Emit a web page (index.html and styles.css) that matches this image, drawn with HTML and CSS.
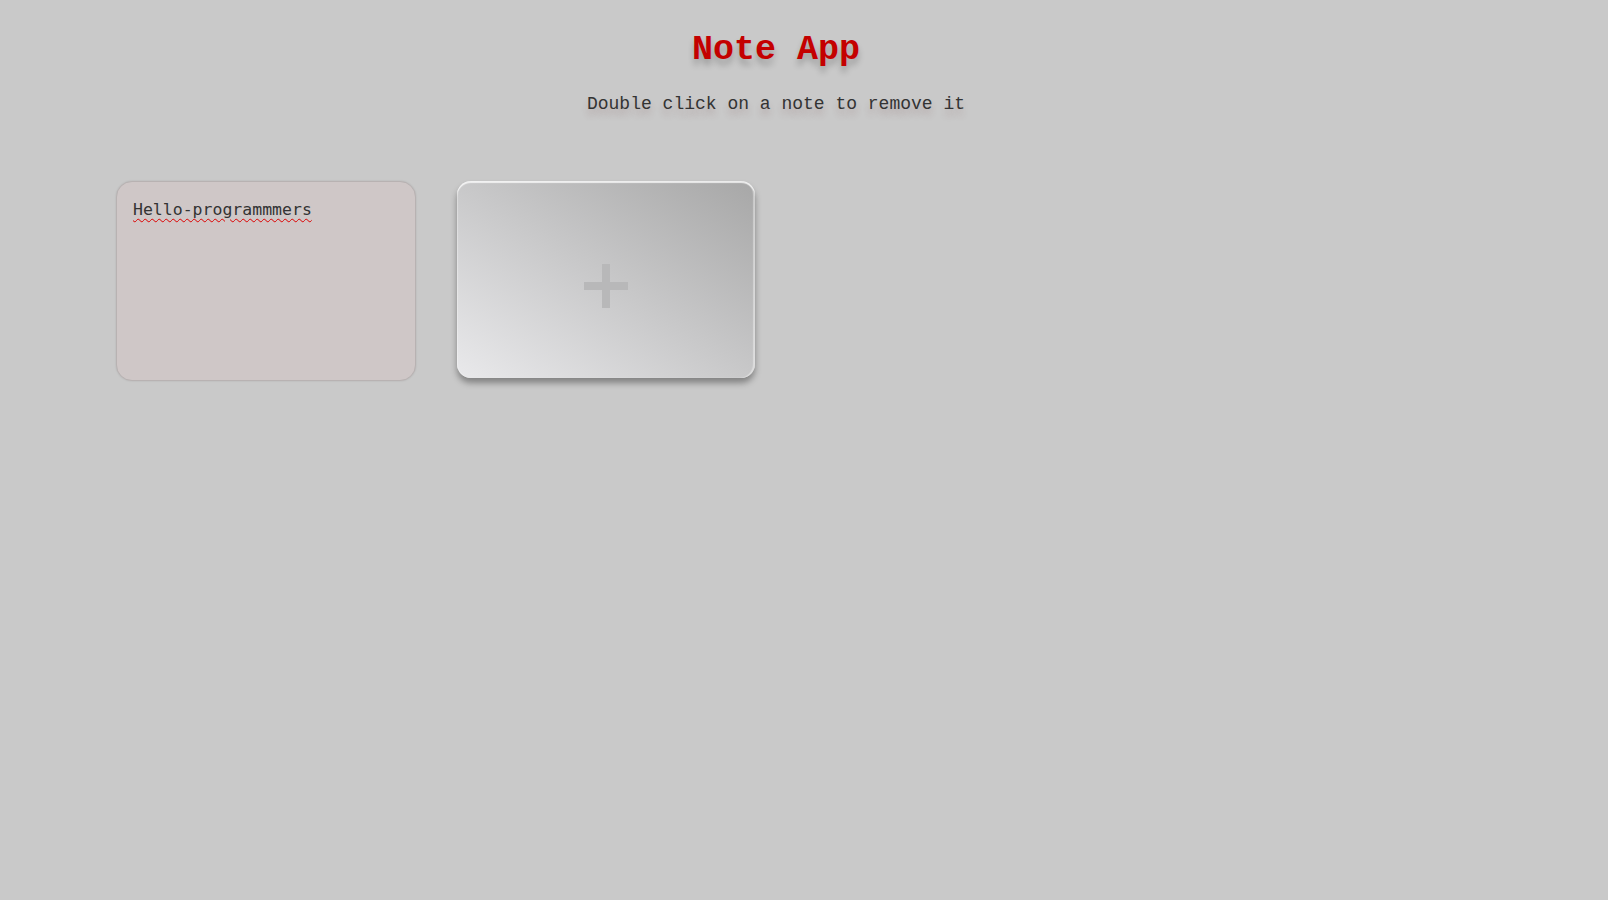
FILE: index.html
```html
<!DOCTYPE html>
<html lang="en">
<head>
<meta charset="utf-8">
<title>Note App</title>
<link rel="stylesheet" href="styles.css">
</head>
<body>
<header class="header">
  <h1 class="title">Note App</h1>
  <p class="subtitle">Double click on a note to remove it</p>
</header>
<main class="notes">
  <div class="note"><span class="misspelled">Hello-programmmers</span></div>
  <button class="add-note" type="button" aria-label="Add note">
    <svg class="plus" width="44" height="44" viewBox="0 0 44 44" aria-hidden="true">
      <rect x="0" y="18" width="44" height="8" fill="#b8b8b9"/>
      <rect x="18" y="0" width="8" height="44" fill="#b8b8b9"/>
    </svg>
  </button>
</main>
</body>
</html>
```
FILE: styles.css
```css
html, body {
  margin: 0;
  padding: 0;
}
body {
  background: #c9c9c9;
  min-height: 900px;
  font-family: "Liberation Mono", "Courier New", monospace;
}
.header {
  display: flex;
  flex-direction: column;
  align-items: center;
  margin-right: 56px;
  padding-top: 30px;
}
.title {
  margin: 0;
  font-family: "Liberation Mono", "Courier New", monospace;
  font-weight: bold;
  font-size: 35px;
  line-height: 40px;
  color: #c40000;
  text-shadow: 0 6px 6px rgba(0, 0, 0, 0.22);
}
.subtitle {
  margin: 23px 0 0;
  font-size: 18px;
  line-height: 22px;
  color: #333;
  text-shadow: 0 6px 6px rgba(120, 70, 70, 0.25);
}
.notes {
  display: flex;
  gap: 41px;
  padding: 66px 0 0 116px;
}
.note {
  box-sizing: border-box;
  width: 300px;
  height: 200px;
  padding: 18px 16px 14px;
  background: #cfc7c7;
  border: 1px solid #b8b2b2;
  border-radius: 16px;
  box-shadow: 0 0 2px rgba(0, 0, 0, 0.12);
  font-family: "DejaVu Sans Mono", monospace;
  font-size: 16.5px;
  line-height: 20px;
  color: #333;
}
.misspelled {
  text-decoration: underline wavy #d00;
  text-decoration-thickness: 1px;
  text-underline-offset: 3px;
}
.add-note {
  box-sizing: border-box;
  width: 298px;
  height: 197px;
  margin: 0;
  padding: 12px 0 0;
  display: flex;
  align-items: center;
  justify-content: center;
  border: none;
  border-radius: 14px;
  background: linear-gradient(to top right, #e9e9eb 0%, #c8c8c9 50%, #a7a7a7 100%);
  box-shadow: inset 0 2px 1px rgba(255, 255, 255, 0.75),
              inset 1px 0 1px rgba(255, 255, 255, 0.3),
              inset -2px 0 1px rgba(255, 255, 255, 0.4),
              0 5px 6px rgba(0, 0, 0, 0.35);
  cursor: pointer;
}
.plus {
  display: block;
}
```
